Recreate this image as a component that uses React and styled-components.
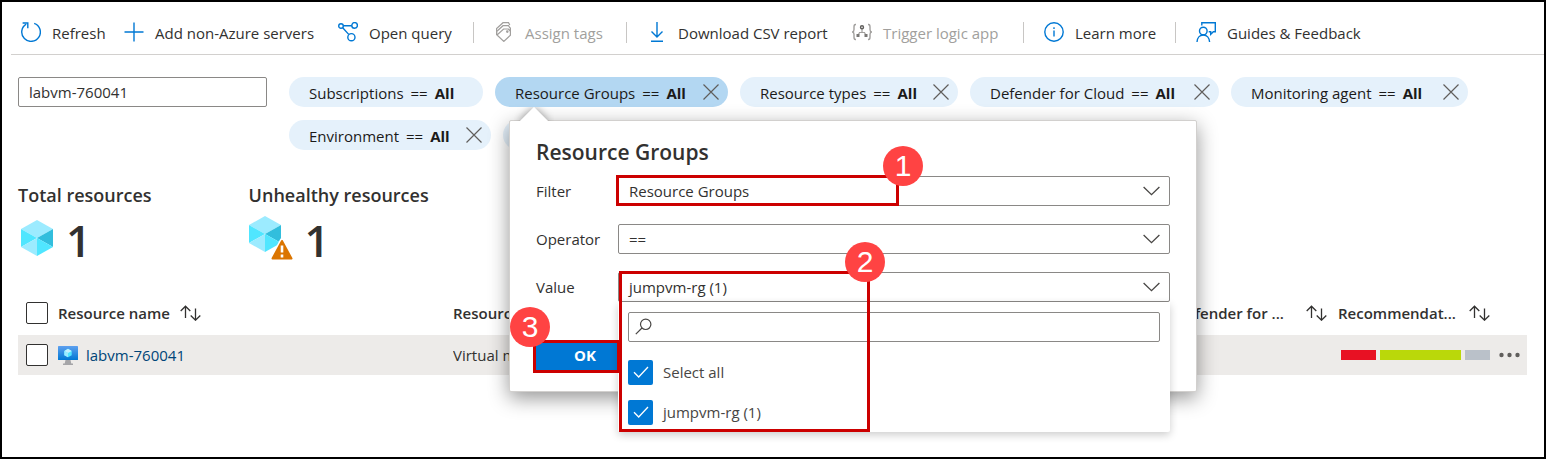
import React from "react";
import styled, { createGlobalStyle, css } from "styled-components";

const GlobalStyle = createGlobalStyle`
  *, *::before, *::after { box-sizing: border-box; }
  body {
    margin: 0;
    background: #fff;
    color: #323130;
    font-family: "Open Sans", "Noto Sans", sans-serif;
    font-size: 15px;
    line-height: 20px;
  }
  button, input, select { font: inherit; color: inherit; margin: 0; }
`;

const Frame = styled.main`
  min-height: 100vh;
  border: 2px solid #000;
  background: #fff;
`;

const Toolbar = styled.div`
  display: flex;
  align-items: center;
  height: 53px;
  margin-left: 9px;
  padding: 10px 0 0 10px;
  border-bottom: 1px solid #d2d0ce;
`;

const Command = styled.button`
  display: flex;
  align-items: center;
  gap: 11px;
  flex: none;
  width: ${(p) => p.$width}px;
  height: 30px;
  padding: 0;
  border: 0;
  background: none;
  white-space: nowrap;
  color: ${(p) => (p.disabled ? "#a19f9d" : "#323130")};
  svg { flex: none; margin-bottom: 2px; }
`;

const Separator = styled.span`
  flex: none;
  width: 1px;
  height: 21px;
  margin: 0 20px 2px 0;
  background: #c8c6c4;
`;

const FilterBar = styled.section`
  display: flex;
  align-items: flex-start;
  gap: 22px;
  padding: 22px 16px 0;
`;

const SearchInput = styled.input`
  flex: none;
  width: 249px;
  height: 30px;
  padding: 0 10px;
  border: 1px solid #8a8886;
  border-radius: 2px;
  background: #fff;
  outline: 0;
`;

const Pills = styled.div`
  display: flex;
  flex: 1;
  flex-wrap: wrap;
  gap: 13px 12px;
`;

const PillSlot = styled.div`
  position: relative;
`;

const Pill = styled.div`
  display: flex;
  align-items: center;
  width: ${(p) => p.$width}px;
  height: 30px;
  padding: 0 9px 0 20px;
  border: 0;
  border-radius: 15px;
  color: #1b1a19;
  background: ${(p) => (p.$active ? "#b3d7f2" : "#e5f1fb")};
`;

const PillLabel = styled.button`
  display: flex;
  flex: 1;
  gap: 7px;
  padding: 2px 0 0;
  border: 0;
  background: none;
  text-align: left;
  white-space: nowrap;
  b { font-weight: 700; }
`;

const PillClose = styled.button`
  display: flex;
  padding: 0;
  border: 0;
  background: none;
`;

const Popover = styled.div`
  position: absolute;
  z-index: 2;
  top: 43px;
  left: 14px;
  width: 688px;
  padding: 16px 26px 20px;
  border: 1px solid #d2d0ce;
  border-radius: 2px;
  background: #fff;
  box-shadow: 0 6px 20px rgba(0, 0, 0, 0.42);
`;

const Beak = styled.span`
  position: absolute;
  top: -14px;
  left: 4px;
  width: 40px;
  height: 14px;
  overflow: hidden;
  &::before {
    content: "";
    position: absolute;
    top: 4px;
    left: 10px;
    width: 20px;
    height: 20px;
    background: #fff;
    box-shadow: 0 0 8px rgba(0, 0, 0, 0.4);
    transform: rotate(45deg);
  }
`;

const PopoverTitle = styled.h2`
  margin: 0 0 9px;
  font-size: 21px;
  font-weight: 600;
  line-height: 30px;
`;

const Fields = styled.div`
  display: grid;
  grid-template-columns: 82px 1fr;
  row-gap: 18px;
  align-items: center;
`;

const Control = styled.div`
  position: relative;
  height: 30px;
  > svg {
    position: absolute;
    top: 10px;
    right: 10px;
    pointer-events: none;
  }
`;

const field = css`
  display: block;
  width: 100%;
  height: 30px;
  padding: 0 10px;
  border: 1px solid #8a8886;
  border-radius: 2px;
  background: #fff;
  text-align: left;
  outline: 0;
`;

const Select = styled.select`
  ${field}
  appearance: none;
`;

const ValueButton = styled.button`
  ${field}
`;

const Menu = styled.div`
  position: absolute;
  z-index: 1;
  top: 30px;
  left: 0;
  right: 0;
  padding: 10px 10px 0;
  border-radius: 0 0 2px 2px;
  background: #fff;
  box-shadow: 0 3px 8px rgba(0, 0, 0, 0.2);
`;

const MenuSearch = styled.label`
  display: flex;
  align-items: center;
  gap: 8px;
  height: 30px;
  margin-bottom: 10px;
  padding: 0 6px;
  border: 1px solid #8a8886;
  border-radius: 2px;
  svg { margin-bottom: 2px; }
  input { flex: 1; min-width: 0; border: 0; padding: 0; outline: 0; background: none; }
`;

const Option = styled.label`
  display: flex;
  align-items: center;
  gap: 10px;
  height: 40px;
  color: #484644;
`;

const Tick = styled.span`
  display: grid;
  place-items: center;
  width: 25px;
  height: 25px;
  > * { grid-area: 1 / 1; }
  svg { pointer-events: none; }
`;

const TickInput = styled.input`
  appearance: none;
  width: 25px;
  height: 25px;
  border-radius: 2px;
  background: #0078d4;
`;

const OkButton = styled.button`
  display: block;
  width: 98px;
  height: 30px;
  margin: 38px 0 1px;
  padding: 0;
  border: 0;
  background: #0078d4;
  color: #fff;
  font-weight: 700;
`;

const Mark = styled.div`
  position: absolute;
  z-index: 3;
  left: ${(p) => p.$x}px;
  top: ${(p) => p.$y}px;
  width: ${(p) => p.$w}px;
  height: ${(p) => p.$h}px;
  border: 3px solid #c00;
  pointer-events: none;
`;

const Badge = styled.span`
  position: absolute;
  z-index: 4;
  left: ${(p) => p.$x}px;
  top: ${(p) => p.$y}px;
  width: 40px;
  height: 40px;
  border-radius: 50%;
  background: #ff4343;
  color: #fff;
  font-family: "Liberation Sans", Arial, sans-serif;
  font-size: 30px;
  line-height: 40px;
  text-align: center;
`;

const Stats = styled.section`
  display: flex;
  gap: 97px;
  padding: 33px 16px 0;
`;

const Stat = styled.div`
  h3 {
    margin: 0;
    font-size: 18px;
    font-weight: 600;
    line-height: 24px;
  }
`;

const StatValue = styled.div`
  display: flex;
  align-items: center;
  gap: 10px;
  height: 66px;
  font-size: 44px;
  font-weight: 600;
  line-height: 60px;
  svg { margin-bottom: 5px; }
`;

const TableWrap = styled.section`
  padding: 18px 17px 0 16px;
`;

const Table = styled.table`
  width: 100%;
  table-layout: fixed;
  border-collapse: collapse;
  th, td {
    padding: 0;
    text-align: left;
    white-space: nowrap;
    overflow: hidden;
  }
  th { height: 44px; font-weight: 600; }
  td { height: 40px; background: #edebe9; }
  td:first-child, th:first-child { padding-left: 8px; }
`;

const Cell = styled.div`
  display: flex;
  align-items: center;
  justify-content: ${(p) => (p.$spread ? "space-between" : "flex-start")};
  gap: ${(p) => p.$gap ?? 10}px;
  padding-right: ${(p) => (p.$spread ? 11 : 0)}px;
`;

const RowCheckbox = styled.input`
  display: block;
  appearance: none;
  width: 22px;
  height: 22px;
  border: 1px solid #323130;
  border-radius: 2px;
  background: #fff;
`;

const ResourceLink = styled.a`
  color: #004578;
  text-decoration: none;
`;

const Bars = styled.div`
  display: flex;
  gap: 4px;
  padding: 0 3px;
`;

const Bar = styled.span`
  flex: ${(p) => p.$share};
  height: 10px;
  background: ${(p) => p.$color};
`;

const MoreButton = styled.button`
  display: flex;
  padding: 0 0 0 6px;
  border: 0;
  background: none;
`;

const Svg = ({ w = 20, h = 20, children, ...rest }) => (
  <svg width={w} height={h} viewBox={`0 0 ${w} ${h}`} fill="none" stroke="#0078d4" strokeWidth="1.4" aria-hidden="true" {...rest}>
    {children}
  </svg>
);

const RefreshIcon = () => (
  <Svg>
    <path d="M13.2 1.3A9.3 9.3 0 1 1 5.2 2.1" />
    <path d="M1.6 1h5.2v5.2" />
  </Svg>
);
const PlusIcon = () => <Svg><path d="M10 .5v19M.5 10h19" /></Svg>;
const QueryIcon = () => (
  <Svg>
    <circle cx="3" cy="4" r="2.3" />
    <circle cx="16.6" cy="3.4" r="2.8" />
    <circle cx="13.4" cy="15.2" r="3.6" />
    <path d="M5.4 3.8h8.4M4.7 5.8l6 6.6" />
  </Svg>
);
const TagsIcon = () => (
  <Svg stroke="#a19f9d" strokeWidth="1.2">
    <path d="M2.600 9.500V6.500L9 .7h5.500l1.300 2.300" />
    <path d="M2.600 12V9.500L9 3.700h5.500L16 6" />
    <path d="M3 13 9.600 7h4.800l2 2.300v3.900l-6.600 6.200L3 13zM2.600 9.500V13M16.400 5.500V9.500" />
    <circle cx="13.300" cy="9.600" r=".7" />
  </Svg>
);
const DownloadIcon = () => (
  <Svg>
    <path d="M10 0v15M4.500 9.500 10 15l5.500-5.500M4 19.200h12" />
  </Svg>
);
const LogicIcon = () => (
  <Svg stroke="#a19f9d">
    <path d="M4 2.500H3.500C2 2.500 2 3.500 2 5v2.500C2 9 1.500 9.700.5 10c1 .3 1.500 1 1.500 2.500V15c0 1.500 0 2.500 1.500 2.500H4M16 2.500h.5c1.500 0 1.500 1 1.500 2.500v2.500c0 1.500.5 2.200 1.500 2.500-1 .3-1.500 1-1.500 2.500V15c0 1.500 0 2.500-1.500 2.500H16" />
    <path d="M10 6v4M6 13.500 7.500 10.500h5L14 13.500" strokeWidth="1.200" />
    <circle cx="10" cy="5.300" r="1.500" stroke="#605e5c" />
    <path d="M4.500 12h3v3h-3zM12.500 12h3v3h-3z" fill="#797775" stroke="none" />
  </Svg>
);
const InfoIcon = () => (
  <Svg>
    <circle cx="10" cy="10" r="9.200" />
    <path d="M10 8.500V14.500" />
    <path d="M10 5.300v1.700" />
  </Svg>
);
const FeedbackIcon = () => (
  <Svg>
    <circle cx="7.300" cy="9" r="3.800" />
    <path d="M1 20c.2-4 2.700-7 6.300-7s6 3 6.300 7" />
    <path d="M5.800 3.500V.8h13.500v9h-2l-2.600 2.600V9.800h-2" />
  </Svg>
);
const CloseIcon = () => (
  <Svg w={16} h={16} stroke="#605e5c" strokeWidth="1.200"><path d="M.5.5l15 15M15.500.5l-15 15" /></Svg>
);
const ChevronIcon = () => (
  <Svg w={17} h={10} stroke="#484644" strokeWidth="1.300"><path d="M.6 1l7.900 7.700L16.400 1" /></Svg>
);
const MagnifierIcon = () => (
  <Svg w={17} h={17} stroke="#484644" strokeWidth="1.200">
    <circle cx="10.700" cy="6.300" r="5.200" />
    <path d="M7 10 .8 16.200" />
  </Svg>
);
const CheckIcon = () => (
  <Svg w={16} h={12} stroke="#fff" strokeWidth="1.300"><path d="M1 6.200 5.700 11 15 1" /></Svg>
);
const SortIcon = () => (
  <Svg w={21} h={16} stroke="#323130" strokeWidth="1.300">
    <path d="M5.500 13V1.500M.7 6l4.800-4.800L10.300 6M15.500 3.500v11.500M10.700 10.500l4.800 4.700 4.800-4.700" />
  </Svg>
);
const DotsIcon = () => (
  <Svg w={21} h={6} stroke="none" fill="#605e5c">
    <circle cx="2.500" cy="3" r="2.200" />
    <circle cx="10.500" cy="3" r="2.200" />
    <circle cx="18.500" cy="3" r="2.200" />
  </Svg>
);
const CubeFaces = () => (
  <g stroke="none">
    <path d="M19 1 35 10 19 19 3 10z" fill="#9cebff" />
    <path d="M3 10v18l16-9z" fill="#50e6ff" />
    <path d="M35 10v18l-16-9z" fill="#32bedd" />
    <path d="M3 28l16-9v18z" fill="#9cebff" />
    <path d="M35 28l-16-9v18z" fill="#50e6ff" />
  </g>
);
const CubeIcon = () => <Svg w={38} h={38}><CubeFaces /></Svg>;
const CubeWarningIcon = () => (
  <Svg w={46} h={46}>
    <g transform="translate(-3 0)"><CubeFaces /></g>
    <path d="M33 25 43 44H23z" fill="#db7500" stroke="#fff" strokeWidth="4" strokeLinejoin="round" />
    <path d="M33 26 42.500 43.500h-19z" fill="#db7500" stroke="#db7500" strokeWidth="2" strokeLinejoin="round" />
    <path d="M33 30.500v7M33 39.500v3" stroke="#fff" strokeWidth="2.600" />
  </Svg>
);
const VmIcon = () => (
  <Svg w={20} h={19} stroke="none">
    <defs>
      <linearGradient id="screen" x1="0" y1="0" x2="0" y2="1">
        <stop offset="0" stopColor="#5ea0ef" />
        <stop offset="1" stopColor="#0078d4" />
      </linearGradient>
    </defs>
    <path d="M7.500 14h5l.8 3.500h1.700V19H5v-1.500h1.700z" fill="#a5a5a8" />
    <rect width="20" height="14" rx=".6" fill="url(#screen)" />
    <path d="M10 2.800 13.700 4.900v4.300L10 11.300 6.300 9.200V4.900z" fill="#50e6ff" />
    <path d="M10 2.800 13.700 4.900 10 7 6.300 4.900z" fill="#c3f1ff" />
    <path d="M6.300 4.900 10 7v4.300L6.300 9.200z" fill="#9cebff" />
  </Svg>
);

const commands = [
  { label: "Refresh", icon: RefreshIcon, width: 103 },
  { label: "Add non-Azure servers", icon: PlusIcon, width: 214 },
  { label: "Open query", icon: QueryIcon, width: 135, separator: true },
  { label: "Assign tags", icon: TagsIcon, width: 132, disabled: true, separator: true },
  { label: "Download CSV report", icon: DownloadIcon, width: 205 },
  { label: "Trigger logic app", icon: LogicIcon, width: 171, disabled: true, separator: true },
  { label: "Learn more", icon: InfoIcon, width: 131, separator: true },
  { label: "Guides & Feedback", icon: FeedbackIcon, width: 180 },
];

const pills = [
  { label: "Subscriptions", width: 194, fixed: true },
  { label: "Resource Groups", width: 233, active: true },
  { label: "Resource types", width: 218 },
  { label: "Defender for Cloud", width: 249 },
  { label: "Monitoring agent", width: 237 },
  { label: "Environment", width: 202 },
];

function ResourceGroupsPopover() {
  return (
    <Popover role="dialog" aria-labelledby="popover-title">
      <Beak />
      <PopoverTitle id="popover-title">Resource Groups</PopoverTitle>
      <Fields>
        <label htmlFor="filter">Filter</label>
        <Control>
          <Select id="filter"><option>Resource Groups</option></Select>
          <ChevronIcon />
        </Control>
        <label htmlFor="operator">Operator</label>
        <Control>
          <Select id="operator"><option>==</option></Select>
          <ChevronIcon />
        </Control>
        <label htmlFor="value">Value</label>
        <Control>
          <ValueButton id="value" type="button" aria-haspopup="true" aria-expanded="true">jumpvm-rg (1)</ValueButton>
          <ChevronIcon />
          <Menu>
            <MenuSearch>
              <MagnifierIcon />
              <input type="text" aria-label="Search values" />
            </MenuSearch>
            {["Select all", "jumpvm-rg (1)"].map((text) => (
              <Option key={text}>
                <Tick>
                  <TickInput type="checkbox" defaultChecked />
                  <CheckIcon />
                </Tick>
                {text}
              </Option>
            ))}
          </Menu>
        </Control>
      </Fields>
      <OkButton type="button">OK</OkButton>
      <Mark $x={106} $y={54} $w={283} $h={31} />
      <Mark $x={23} $y={219} $w={87} $h={33} />
      <Mark $x={109} $y={150} $w={251} $h={161} />
      <Badge $x={373} $y={25}>1</Badge>
      <Badge $x={335} $y={121}>2</Badge>
      <Badge $x={0} $y={186}>3</Badge>
    </Popover>
  );
}

export default function App() {
  return (
    <>
      <GlobalStyle />
      <Frame>
        <Toolbar role="toolbar">
          {commands.map(({ label, icon: Icon, width, disabled, separator }) => (
            <React.Fragment key={label}>
              <Command type="button" $width={width} disabled={disabled}>
                <Icon />
                {label}
              </Command>
              {separator && <Separator />}
            </React.Fragment>
          ))}
        </Toolbar>

        <FilterBar>
          <SearchInput type="text" aria-label="Filter by name" defaultValue="labvm-760041" />
          <Pills>
            {pills.map((pill) => (
              <PillSlot key={pill.label}>
                <Pill $width={pill.width} $active={pill.active}>
                  <PillLabel type="button">
                    <span>{pill.label}</span>
                    <span>==</span>
                    <b>All</b>
                  </PillLabel>
                  {!pill.fixed && (
                    <PillClose type="button" aria-label={`Remove ${pill.label}`}><CloseIcon /></PillClose>
                  )}
                </Pill>
                {pill.active && <ResourceGroupsPopover />}
              </PillSlot>
            ))}
            <Pill as="button" type="button" aria-label="Add filter" $width={120} />
          </Pills>
        </FilterBar>

        <Stats>
          <Stat>
            <h3>Total resources</h3>
            <StatValue><CubeIcon />1</StatValue>
          </Stat>
          <Stat>
            <h3>Unhealthy resources</h3>
            <StatValue><CubeWarningIcon />1</StatValue>
          </Stat>
        </Stats>

        <TableWrap>
          <Table>
            <colgroup>
              <col style={{ width: 40 }} />
              <col style={{ width: 395 }} />
              <col />
              <col style={{ width: 163 }} />
              <col style={{ width: 155 }} />
              <col style={{ width: 34 }} />
            </colgroup>
            <thead>
              <tr>
                <th><RowCheckbox type="checkbox" aria-label="Select all resources" /></th>
                <th><Cell>Resource name <SortIcon /></Cell></th>
                <th>Resource type</th>
                <th><Cell $spread>Defender for ... <SortIcon /></Cell></th>
                <th><Cell $gap={13}>Recommendat... <SortIcon /></Cell></th>
                <th aria-label="Actions" />
              </tr>
            </thead>
            <tbody>
              <tr>
                <td><RowCheckbox type="checkbox" aria-label="Select labvm-760041" /></td>
                <td><Cell $gap={8}><VmIcon /><ResourceLink href="#labvm-760041">labvm-760041</ResourceLink></Cell></td>
                <td>Virtual machine</td>
                <td />
                <td>
                  <Bars>
                    <Bar $share={35} $color="#e81123" />
                    <Bar $share={82} $color="#bad80a" />
                    <Bar $share={25} $color="#bac1c9" />
                  </Bars>
                </td>
                <td><MoreButton type="button" aria-label="More actions"><DotsIcon /></MoreButton></td>
              </tr>
            </tbody>
          </Table>
        </TableWrap>
      </Frame>
    </>
  );
}
